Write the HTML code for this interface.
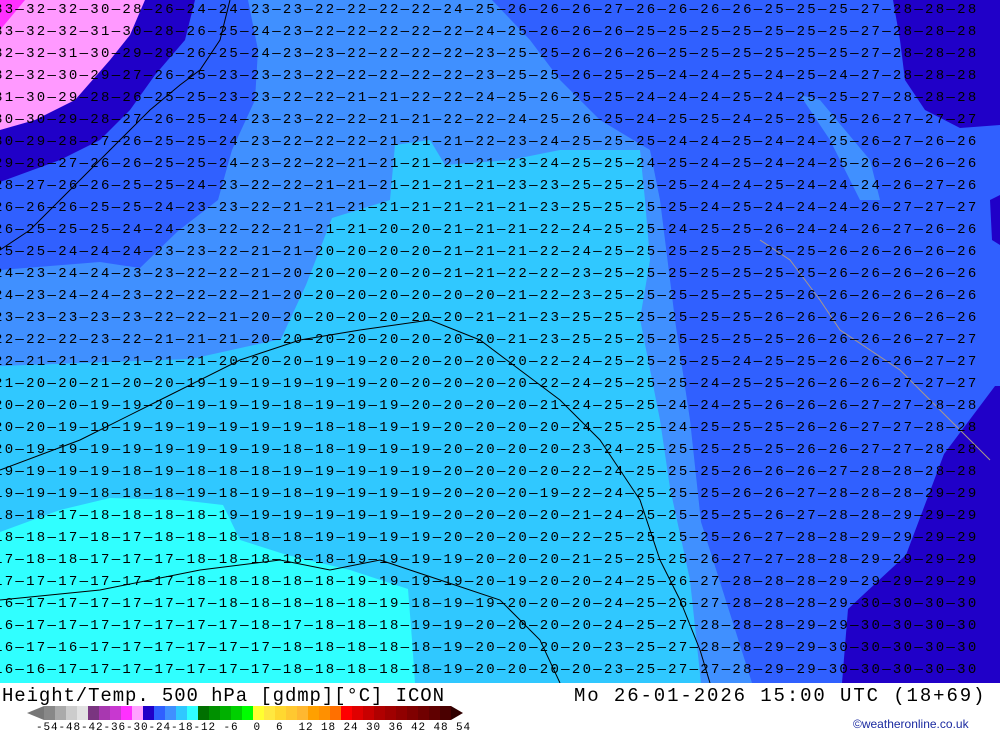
<!DOCTYPE html>
<html><head><meta charset="utf-8"><style>
html,body{margin:0;padding:0;background:#fff;width:1000px;height:733px;overflow:hidden;position:relative}
#map{position:absolute;left:0;top:0;width:1000px;height:683px;overflow:hidden}
.r{position:absolute;left:-6px;white-space:pre;font-family:"Liberation Mono",monospace;font-size:14px;letter-spacing:2.3px;color:#000;line-height:14px}
.t{position:absolute;font-family:"Liberation Mono",monospace;font-size:19px;color:#000;white-space:pre;line-height:20px}
.cb{position:absolute;top:706px;height:14px}
.lab{position:absolute;top:723px;left:36px;font-family:"Liberation Mono",monospace;font-size:11px;letter-spacing:0.9px;white-space:pre;color:#000;line-height:11px}
</style></head><body>
<div id="map">
<svg width="1000" height="683" style="position:absolute;left:0;top:0">
<rect width="1000" height="683" fill="#3060ff"/>
<polygon fill="#4090ff" points="248,0 492,0 530,40 560,80 600,120 650,150 660,200 675,320 690,420 701,522 752,683 0,683 0,270 100,262 140,268 178,231 218,200 232,150 255,100 258,50"/>
<polygon fill="#4090ff" points="800,95 820,100 870,160 880,200 860,200 830,140"/>
<polygon fill="#30c8ff" points="395,145 430,140 445,165 510,160 560,150 600,150 640,150 645,200 650,260 640,319 660,420 670,488 690,580 701,683 0,683 0,366 191,359 281,339 306,285 332,218 390,200"/>
<polygon fill="#30ffff" points="0,532 60,510 110,498 180,500 223,505 240,540 287,555 350,570 408,589 412,640 415,683 0,683"/>
<polygon fill="#2000c8" points="0,0 195,0 185,40 155,75 130,110 100,140 60,160 0,182"/>
<polygon fill="#ff99ff" points="0,0 145,0 130,35 110,60 75,100 35,120 0,130"/>
<polygon fill="#ff30ff" points="0,0 25,0 0,30"/>
<polygon fill="#2000c8" points="893,0 1000,0 1000,125 960,128 925,110 905,80 900,40"/>
<polygon fill="#2000c8" points="1000,386 995,386 944,454 906,555 848,609 842,683 1000,683"/>
<polygon fill="#2000c8" points="990,200 1000,195 1000,245 992,240"/>
<polyline fill="none" stroke="#000" stroke-width="1" points="230,0 220,40 200,70 180,85 150,110 110,150 70,190 30,230 0,250"/>
<polyline fill="none" stroke="#000" stroke-width="1" points="0,470 80,440 160,400 240,360 300,340 360,330 430,320 480,340 520,370 560,400 600,440 620,470 640,500 660,560 680,600 700,650 710,683"/>
<polyline fill="none" stroke="#000" stroke-width="1" points="0,600 100,590 200,570 280,560 330,570 380,560 440,580 500,600 540,640 560,683"/>
<polyline fill="none" stroke="#aa9988" stroke-width="1" points="760,240 790,260 820,300 840,330 870,350 900,370 930,400 960,430 990,460"/>
</svg>
<div class="r" style="top:3px">33—32—32—30—28—26—24—24—23—23—22—22—22—22—24—25—26—26—26—27—26—26—26—26—25—25—25—27—28—28—28</div>
<div class="r" style="top:25px">33—32—32—31—30—28—26—25—24—23—22—22—22—22—22—24—25—26—26—26—25—25—25—25—25—25—25—27—28—28—28</div>
<div class="r" style="top:47px">32—32—31—30—29—28—26—25—24—23—23—22—22—22—22—23—25—25—26—26—26—25—25—25—25—25—25—27—28—28—28</div>
<div class="r" style="top:69px">32—32—30—29—27—26—25—23—23—23—22—22—22—22—22—23—25—25—26—25—25—24—24—25—24—25—24—27—28—28—28</div>
<div class="r" style="top:91px">31—30—29—28—26—25—25—23—23—22—22—21—21—22—22—24—25—26—25—25—24—24—24—25—24—25—25—27—28—28—28</div>
<div class="r" style="top:113px">30—30—29—28—27—26—25—24—23—23—22—22—21—21—22—22—24—25—26—25—24—25—25—24—25—25—25—26—27—27—27</div>
<div class="r" style="top:135px">30—29—28—27—26—25—25—24—23—22—22—22—21—21—21—22—23—24—25—25—25—24—24—25—24—24—25—26—27—26—26</div>
<div class="r" style="top:157px">29—28—27—26—26—25—25—24—23—22—22—21—21—21—21—21—23—24—25—25—24—25—24—25—24—24—25—26—26—26—26</div>
<div class="r" style="top:179px">28—27—26—26—25—25—24—23—22—22—21—21—21—21—21—21—23—23—25—25—25—25—24—24—25—24—24—24—26—27—26</div>
<div class="r" style="top:201px">26—26—26—25—25—24—23—23—22—21—21—21—21—21—21—21—21—23—25—25—25—25—24—25—24—24—24—26—27—27—27</div>
<div class="r" style="top:223px">26—25—25—25—24—24—23—22—22—21—21—21—20—20—21—21—21—22—24—25—25—24—25—25—26—24—24—26—27—26—26</div>
<div class="r" style="top:245px">25—25—24—24—24—23—23—22—21—21—20—20—20—20—21—21—21—22—24—25—25—25—25—25—25—25—26—26—26—26—26</div>
<div class="r" style="top:267px">24—23—24—24—23—23—22—22—21—20—20—20—20—20—21—21—22—22—23—25—25—25—25—25—25—25—26—26—26—26—26</div>
<div class="r" style="top:289px">24—23—24—24—23—22—22—22—21—20—20—20—20—20—20—20—21—22—23—25—25—25—25—25—25—26—26—26—26—26—26</div>
<div class="r" style="top:311px">23—23—23—23—23—22—22—21—20—20—20—20—20—20—20—21—21—23—25—25—25—25—25—25—26—26—26—26—26—26—26</div>
<div class="r" style="top:333px">22—22—22—23—22—21—21—21—20—20—20—20—20—20—20—20—21—23—25—25—25—25—25—25—25—26—26—26—26—27—27</div>
<div class="r" style="top:355px">22—21—21—21—21—21—21—20—20—20—19—19—20—20—20—20—20—22—24—25—25—25—25—24—25—25—26—26—26—27—27</div>
<div class="r" style="top:377px">21—20—20—21—20—20—19—19—19—19—19—19—20—20—20—20—20—22—24—25—25—25—24—25—25—26—26—26—27—27—27</div>
<div class="r" style="top:399px">20—20—20—19—19—20—19—19—19—18—19—19—19—20—20—20—20—21—24—25—25—24—24—25—26—26—26—27—27—28—28</div>
<div class="r" style="top:421px">20—20—19—19—19—19—19—19—19—19—18—18—19—19—20—20—20—20—24—25—25—24—25—25—25—26—26—27—27—28—28</div>
<div class="r" style="top:443px">20—19—19—19—19—19—19—19—19—18—18—19—19—19—20—20—20—20—23—24—25—25—25—25—25—26—26—27—27—28—28</div>
<div class="r" style="top:465px">19—19—19—19—18—19—18—18—18—19—19—19—19—19—20—20—20—20—22—24—25—25—25—26—26—26—27—28—28—28—28</div>
<div class="r" style="top:487px">19—19—19—18—18—18—19—18—19—18—19—19—19—19—20—20—20—19—22—24—25—25—25—26—26—27—28—28—28—29—29</div>
<div class="r" style="top:509px">18—18—17—18—18—18—18—19—19—19—19—19—19—19—20—20—20—20—21—24—25—25—25—25—26—27—28—28—29—29—29</div>
<div class="r" style="top:531px">18—18—17—18—17—18—18—18—18—18—19—19—19—19—20—20—20—20—22—25—25—25—25—26—27—28—28—29—29—29—29</div>
<div class="r" style="top:553px">17—18—18—17—17—17—18—18—18—18—18—19—19—19—19—20—20—20—21—25—25—25—26—27—27—28—28—29—29—29—29</div>
<div class="r" style="top:575px">17—17—17—17—17—17—18—18—18—18—18—19—19—19—19—20—19—20—20—24—25—26—27—28—28—28—29—29—29—29—29</div>
<div class="r" style="top:597px">16—17—17—17—17—17—17—18—18—18—18—18—19—18—19—19—20—20—20—24—25—26—27—28—28—28—29—30—30—30—30</div>
<div class="r" style="top:619px">16—17—17—17—17—17—17—17—18—17—18—18—18—19—19—20—20—20—20—24—25—27—28—28—28—29—29—30—30—30—30</div>
<div class="r" style="top:641px">16—17—16—17—17—17—17—17—17—18—18—18—18—18—19—20—20—20—20—23—25—27—28—28—29—29—30—30—30—30—30</div>
<div class="r" style="top:663px">16—16—17—17—17—17—17—17—17—18—18—18—18—18—19—20—20—20—20—23—25—27—27—28—29—29—30—30—30—30—30</div>
</div>
<div class="t" style="left:2px;top:686px;letter-spacing:0.9px">Height/Temp. 500 hPa [gdmp][°C] ICON</div>
<div class="t" style="left:574px;top:686px;letter-spacing:1.9px">Mo 26-01-2026 15:00 UTC (18+69)</div>
<div style="position:absolute;left:853px;top:717px;font-family:'Liberation Sans',sans-serif;font-size:12px;color:#1a2aa0">©weatheronline.co.uk</div>
<svg class="cb" style="left:27px" width="436" height="14">
<polygon points="0,7 17,0 17,14" fill="#777"/>
<g>
<rect x="17" width="11" height="14" fill="#888"/><rect x="28" width="11" height="14" fill="#aaa"/><rect x="39" width="11" height="14" fill="#ccc"/><rect x="50" width="11" height="14" fill="#e2e2e2"/>
<rect x="61" width="11" height="14" fill="#7a3580"/><rect x="72" width="11" height="14" fill="#a838b0"/><rect x="83" width="11" height="14" fill="#c838d0"/><rect x="94" width="11" height="14" fill="#ff30ff"/><rect x="105" width="11" height="14" fill="#ffa0ff"/>
<rect x="116" width="11" height="14" fill="#2000c8"/><rect x="127" width="11" height="14" fill="#3060ff"/><rect x="138" width="11" height="14" fill="#4090ff"/><rect x="149" width="11" height="14" fill="#30c8ff"/><rect x="160" width="11" height="14" fill="#30ffff"/>
<rect x="171" width="11" height="14" fill="#007000"/><rect x="182" width="11" height="14" fill="#009000"/><rect x="193" width="11" height="14" fill="#00b000"/><rect x="204" width="11" height="14" fill="#00d000"/><rect x="215" width="11" height="14" fill="#00ff00"/>
<rect x="226" width="11" height="14" fill="#ffff30"/><rect x="237" width="11" height="14" fill="#ffe840"/><rect x="248" width="11" height="14" fill="#ffd830"/><rect x="259" width="11" height="14" fill="#ffc830"/><rect x="270" width="11" height="14" fill="#ffb830"/><rect x="281" width="11" height="14" fill="#ffa000"/><rect x="292" width="11" height="14" fill="#ff9000"/><rect x="303" width="11" height="14" fill="#ff7000"/>
<rect x="314" width="11" height="14" fill="#ff0000"/><rect x="325" width="11" height="14" fill="#e00000"/><rect x="336" width="11" height="14" fill="#c80000"/><rect x="347" width="11" height="14" fill="#b00000"/><rect x="358" width="11" height="14" fill="#a00000"/><rect x="369" width="11" height="14" fill="#900000"/><rect x="380" width="11" height="14" fill="#800000"/><rect x="391" width="11" height="14" fill="#700000"/><rect x="402" width="11" height="14" fill="#600000"/><rect x="413" width="11" height="14" fill="#4a0000"/>
</g>
<polygon points="424,0 436,7 424,14" fill="#300000"/>
</svg>
<div class="lab">-54-48-42-36-30-24-18-12 -6  0  6  12 18 24 30 36 42 48 54</div>
</body></html>
